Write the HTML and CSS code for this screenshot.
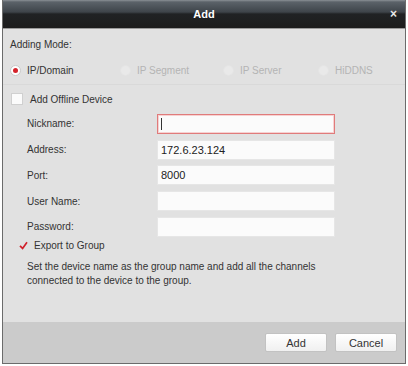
FILE: index.html
```html
<!DOCTYPE html>
<html lang="en">
<head>
  <meta charset="UTF-8">
  <title>Add</title>
  <link rel="stylesheet" href="styles.css">
</head>
<body>

  <div class="dialog">
    <!-- Title bar -->
    <div class="title-bar">
      <span class="title">Add</span>
      <span class="close">&#215;</span>
    </div>

    <div class="content">
      <div class="line">Adding Mode:</div>

      <div class="mode-row">
        <label class="mode"><span class="radio checked"></span>IP/Domain</label>
        <label class="mode disabled"><span class="radio"></span>IP Segment</label>
        <label class="mode disabled"><span class="radio"></span>IP Server</label>
        <label class="mode disabled"><span class="radio"></span>HiDDNS</label>
      </div>

      <div class="offline-row">
        <span class="check"></span>Add Offline Device
      </div>

      <div class="fields">
        <div class="field">
          <span class="field-label">Nickname:</span>
          <div class="input focus"><span class="caret"></span></div>
        </div>
        <div class="field">
          <span class="field-label">Address:</span>
          <div class="input">172.6.23.124</div>
        </div>
        <div class="field">
          <span class="field-label">Port:</span>
          <div class="input">8000</div>
        </div>
        <div class="field">
          <span class="field-label">User Name:</span>
          <div class="input"></div>
        </div>
        <div class="field">
          <span class="field-label">Password:</span>
          <div class="input"></div>
        </div>
      </div>

      <div class="export-row">
        <svg class="tick" width="9" height="9" viewBox="0 0 9 9">
          <path d="M1 4.8 L3.6 7.4 L8 1.2" fill="none" stroke="#d0202a" stroke-width="1.7"/>
        </svg>
        Export to Group
      </div>

      <p class="note">Set the device name as the group name and add all the channels<br>connected to the device to the group.</p>
    </div>

    <div class="footer">
      <button class="btn">Add</button>
      <button class="btn">Cancel</button>
    </div>
  </div>

</body>
</html>
```

FILE: styles.css
```css
body {
  margin: 0;
  background-color: #ffffff;
  font-family: 'Liberation Sans', Arial, sans-serif;
  font-size: 10px;
  color: #333333;
}

.dialog {
  margin-left: 2px;
  width: 402px;
  height: 363px;
  border: 1px solid #6b6b6b;
  border-top: none;
  display: flex;
  flex-direction: column;
  background-color: #e1e1e1;
}

.title-bar {
  height: 28px;
  flex: none;
  display: flex;
  align-items: center;
  justify-content: center;
  position: relative;
  background: linear-gradient(#8a9096 0px, #5b6269 2px, #3e444a 12px, #202224 14px, #1c1c1c 28px);
  border-bottom: 1px solid #9a9a9a;
}

.title {
  color: #ffffff;
  font-weight: bold;
  font-size: 11px;
}

.close {
  position: absolute;
  right: 8px;
  top: 7px;
  color: #e8e8e8;
  font-weight: bold;
  font-size: 12px;
}

.content {
  flex: 1;
  padding: 9px 0 0 7px;
}

.line {
  height: 14px;
  line-height: 14px;
}

.mode-row {
  margin-top: 8px;
  height: 20px;
  display: flex;
  align-items: center;
  margin-left: -7px;
  padding-left: 7px;
  border-bottom: 1px solid #d9d9d9;
  padding-bottom: 4px;
}

.mode {
  display: flex;
  align-items: center;
  flex: none;
  width: 110px;
}

.mode:nth-child(2) { width: 103px; }
.mode:nth-child(3) { width: 95px; }
.mode:nth-child(4) { width: auto; }

.mode.disabled {
  color: #b4b4b4;
}

.radio {
  width: 9px;
  height: 9px;
  border-radius: 50%;
  background-color: #e9e9e9;
  border: 1px solid #e4e4e4;
  margin-right: 6px;
  position: relative;
}

.radio.checked {
  background-color: #ffffff;
  border-color: #c9c9c9;
}

.radio.checked::after {
  content: "";
  position: absolute;
  left: 2px;
  top: 2px;
  width: 5px;
  height: 5px;
  border-radius: 50%;
  background-color: #d5232b;
}

.offline-row {
  height: 20px;
  display: flex;
  align-items: center;
  margin-top: 4px;
  padding-left: 1px;
}

.check {
  width: 10px;
  height: 10px;
  background-color: #fbfbfb;
  border: 1px solid #d0d0d0;
  margin-right: 7px;
}

.fields {
  margin-top: 2px;
}

.field {
  height: 25.75px;
  display: flex;
  align-items: center;
  padding-left: 17px;
}

.field-label {
  width: 130px;
}

.input {
  width: 173px;
  height: 18px;
  line-height: 18px;
  background-color: #fbfbfb;
  border: 1px solid #e6e6e6;
  padding-left: 3px;
  font-size: 11px;
  color: #222222;
}

.input.focus {
  border-color: #e07b7b;
  box-shadow: inset 0 0 0 1px #f6d2d2;
  display: flex;
  align-items: center;
}

.caret {
  width: 1px;
  height: 12px;
  background-color: #333333;
}

.export-row {
  height: 14px;
  margin-top: -1px;
  display: flex;
  align-items: center;
  padding-left: 9px;
}

.tick {
  margin-right: 6px;
}

.note {
  margin: 7px 0 0 17px;
  line-height: 14px;
}

.footer {
  height: 41px;
  flex: none;
  background-color: #cbcbcb;
  display: flex;
  align-items: center;
  justify-content: flex-end;
  gap: 8px;
  padding-right: 8px;
}

.btn {
  width: 62px;
  height: 19px;
  padding: 0;
  font-family: 'Liberation Sans', Arial, sans-serif;
  font-size: 11px;
  color: #333333;
  background: linear-gradient(#ffffff, #f0f0f0);
  border: 1px solid #c2c2c2;
  border-radius: 2px;
}
```
